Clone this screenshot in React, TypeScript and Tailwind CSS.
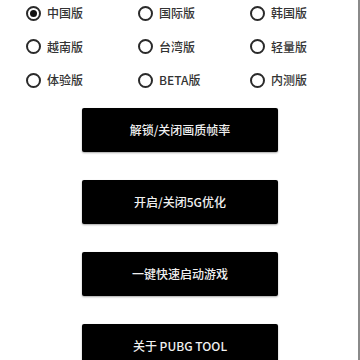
import React, { useState } from 'react';

const versions = [
  '中国版', '国际版', '韩国版',
  '越南版', '台湾版', '轻量版',
  '体验版', 'BETA版', '内测版',
];

const actions = ['解锁/关闭画质帧率', '开启/关闭5G优化', '一键快速启动游戏', '关于 PUBG TOOL'];

export default function App() {
  const [selected, setSelected] = useState('中国版');

  return (
    <div
      className="relative h-[360px] w-[360px] overflow-hidden bg-white"
      style={{ fontFamily: '"Noto Sans CJK SC", "Noto Sans", sans-serif' }}
    >
      {/* scrollbar line on the right */}
      <div className="absolute right-0 top-0 h-full w-[2px] bg-[#8a8a8a]" />

      {/* version radios */}
      <div className="grid grid-cols-[112px_112px_112px] gap-y-[15.5px] pl-[26px] pt-[4px]">
        {versions.map((v) => {
          const on = selected === v;
          return (
            <label
              key={v}
              onClick={() => setSelected(v)}
              className="flex h-[18px] cursor-pointer items-center gap-[6px] text-[12px] font-medium text-[#333]"
            >
              <span className="flex h-[15px] w-[15px] items-center justify-center rounded-full border-2 border-[#2a2a2a]">
                {on && <span className="h-[7px] w-[7px] rounded-full bg-[#111]" />}
              </span>
              <span>{v}</span>
            </label>
          );
        })}
      </div>

      {/* action buttons */}
      <div className="mt-[19px] flex flex-col items-center gap-[28px]">
        {actions.map((a) => (
          <button
            key={a}
            className="flex h-[44px] w-[196px] items-center justify-center rounded-[2px] bg-black text-[12px] font-medium text-[#f0f0f0] shadow-[0_1px_2px_rgba(0,0,0,0.35)]"
          >
            {a}
          </button>
        ))}
      </div>
    </div>
  );
}
